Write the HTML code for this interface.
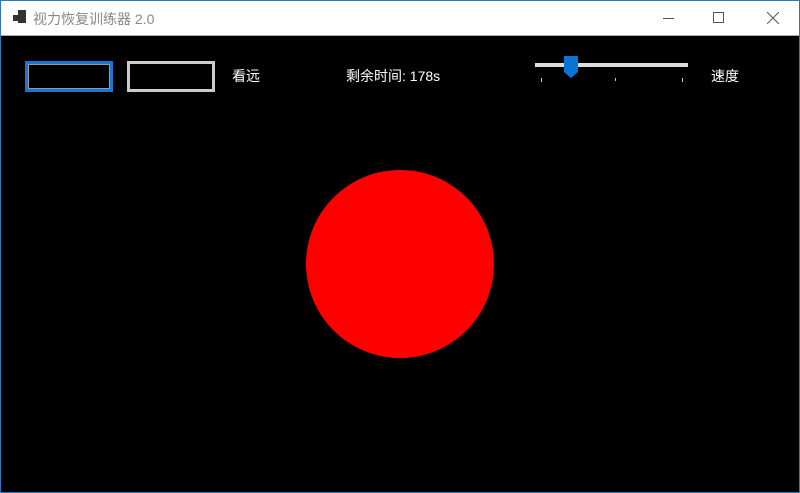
<!DOCTYPE html>
<html><head><meta charset="utf-8"><style>
*{margin:0;padding:0;box-sizing:border-box}
body{width:800px;height:493px;overflow:hidden;background:#000;font-family:"Liberation Sans","Noto Sans CJK SC",sans-serif;position:relative}
.win{position:absolute;left:0;top:0;width:800px;height:493px;border:1px solid #2b79b8;background:#000}
.title{position:absolute;left:0;top:0;width:798px;height:35px;background:#fff;border-bottom:1px solid #aaa}
.t{position:absolute;font-size:14px;color:#fff}
.box{position:absolute;width:88px;height:31px;border:3px solid #ccc;background:#000}
</style></head><body><div class="win">
<div class="title">
<div style="position:absolute;left:12px;top:14px;width:6px;height:6px;background:#333"></div>
<div style="position:absolute;left:17px;top:9px;width:8px;height:8px;background:#333"></div>
<div style="position:absolute;left:17px;top:17px;width:8px;height:5px;background:#333"></div>
<div style="position:absolute;left:32px;top:8px;font-size:14px;color:#888">视力恢复训练器 2.0</div>
<div style="position:absolute;left:662px;top:17px;width:11px;height:1px;background:#555"></div>
<div style="position:absolute;left:712px;top:11px;width:11px;height:11px;border:1px solid #555"></div>
<svg style="position:absolute;left:766px;top:11px" width="12" height="12"><path d="M0 0L12 12M12 0L0 12" stroke="#555" stroke-width="1"/></svg>
</div>
<div class="box" style="left:24px;top:60px;border-color:#1a75d0"><div style="position:absolute;inset:0;border:1px solid #999"></div></div>
<div class="box" style="left:126px;top:60px"></div>
<div class="t" style="left:231px;top:65px">看远</div>
<div class="t" style="left:345px;top:65px">剩余时间: 178s</div>
<div style="position:absolute;left:534px;top:62px;width:153px;height:4px;background:#ddd"></div>
<svg style="position:absolute;left:563px;top:55px" width="14" height="22"><path d="M0 0H14V16L7 22L0 16Z" fill="#0a74d6"/></svg>
<div style="position:absolute;left:540px;top:77px;width:1px;height:4px;background:#ccc"></div>
<div style="position:absolute;left:614px;top:77px;width:1px;height:3px;background:#ccc"></div>
<div style="position:absolute;left:681px;top:77px;width:1px;height:4px;background:#ccc"></div>
<div class="t" style="left:710px;top:65px">速度</div>
<div style="position:absolute;left:305px;top:169px;width:188px;height:188px;border-radius:50%;background:#f00"></div>
</div></body></html>
